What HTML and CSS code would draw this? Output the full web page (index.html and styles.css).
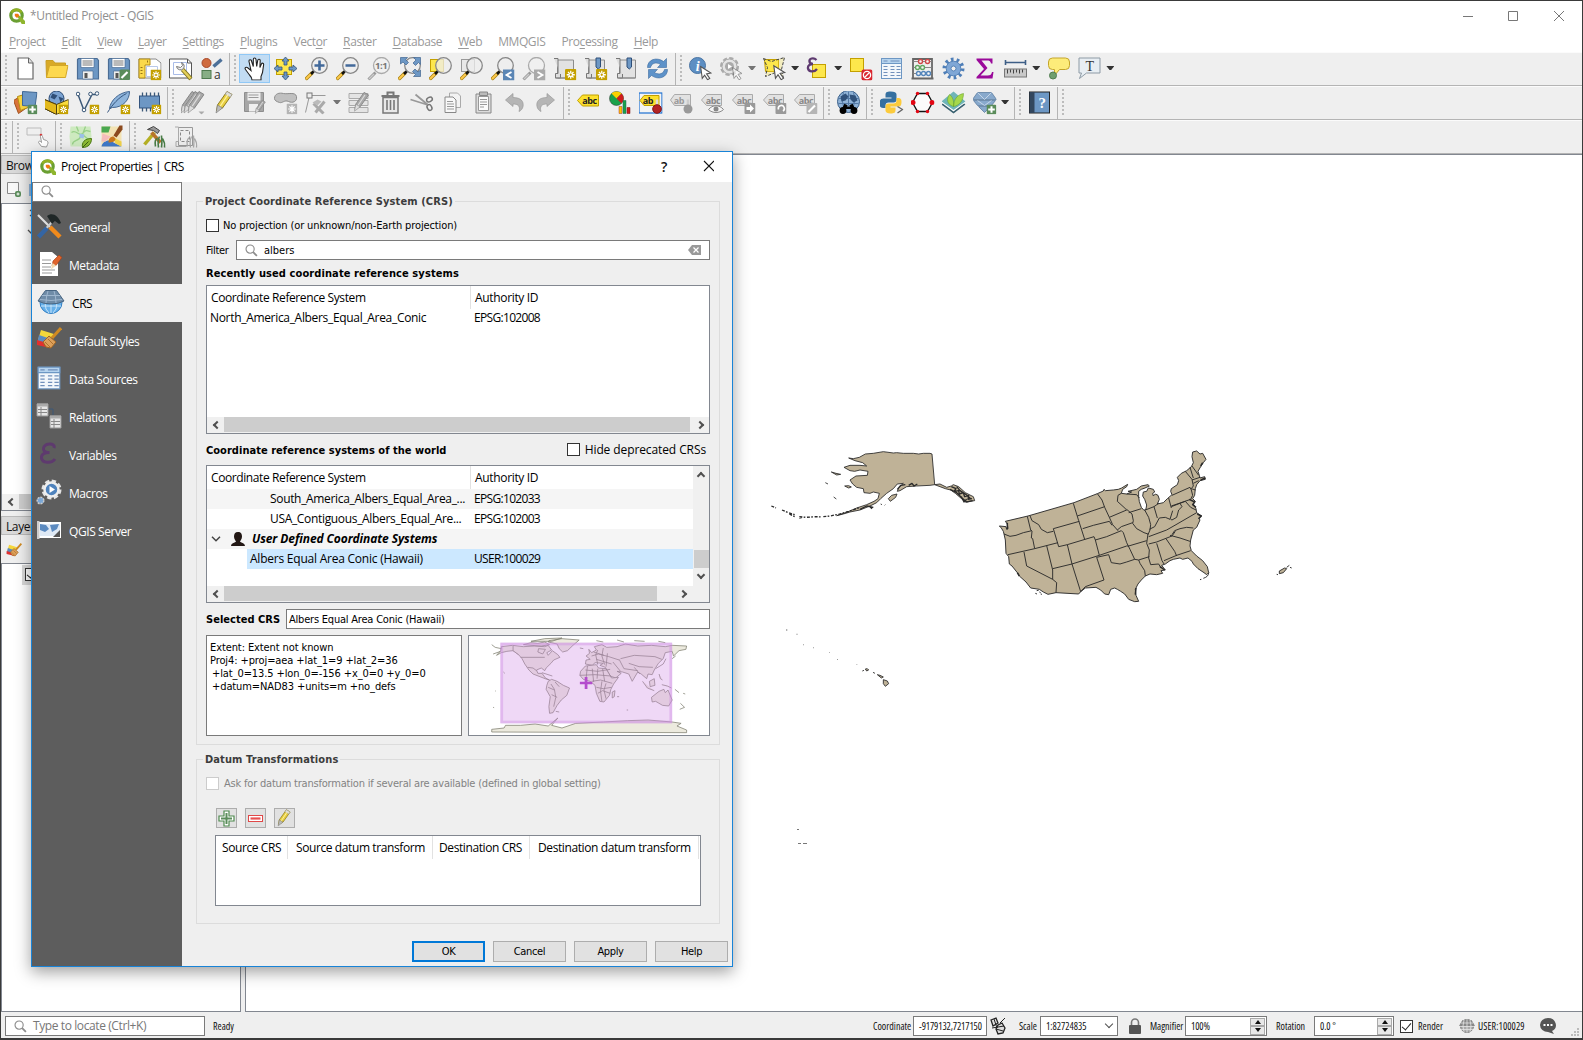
FILE: index.html
```html
<!DOCTYPE html>
<html lang="en">
<head>
<meta charset="utf-8">
<title>*Untitled Project - QGIS</title>
<link rel="stylesheet" href="styles.css">
</head>
<body>
<svg class="sprite" aria-hidden="true">
  <defs>
    <symbol id="logo" viewBox="0 0 16 16"><circle cx="7.5" cy="7.5" r="5.700" fill="none" stroke="#6a9f32" stroke-width="3.200"/><path d="M2.500 4.500A6 6 0 0 1 12.500 4.500" fill="none" stroke="#93b023" stroke-width="2.400"/><path d="M8 8h3l5 5v3h-3.300z" fill="#8fb52e"/><path d="M5.800 5.800h3.200l1.500 1.700-2.500 2.500L5.800 8z" fill="#ee7913"/></symbol>
    <symbol id="glass" viewBox="0 0 14 14"><circle cx="5.500" cy="5.500" r="4.400" fill="none" stroke="#8c8c8c" stroke-width="1.200"/><path d="M8.800 8.800l4 4" stroke="#8c8c8c" stroke-width="2"/></symbol>
    <symbol id="star" viewBox="0 0 10 10"><rect width="10" height="10" rx="1" fill="#c4a000"/><path d="M5 1.500v7M1.500 5h7M2.600 2.600l4.800 4.800M7.400 2.600L2.600 7.400" stroke="#fff" stroke-width="1.100"/><circle cx="5" cy="5" r="1" fill="#c4a000"/></symbol>
    <symbol id="gstar" viewBox="0 0 10 10"><rect width="10" height="10" rx="1" fill="#b5b5b5"/><path d="M5 1.500v7M1.500 5h7M2.600 2.600l4.800 4.800M7.400 2.600L2.600 7.400" stroke="#fff" stroke-width="1.100"/></symbol>
    <symbol id="plus" viewBox="0 0 10 10"><rect width="10" height="10" rx="1.500" fill="#5a8c5a"/><path d="M5 1.700v6.600M1.700 5h6.600" stroke="#fff" stroke-width="2"/></symbol>
    <symbol id="cursor" viewBox="0 0 12 14"><path d="M1 1l9.500 6-4 .8 3 4.200-2 1.300-2.800-4.300L2.500 12z" fill="#fff" stroke="#555" stroke-width="1"/></symbol>
    <symbol id="new" viewBox="0 0 24 24"><path d="M4.500 1.500H15l4.500 5v16h-15z" fill="#fff" stroke="#666" stroke-width="1.200"/><path d="M15 1.500v5h4.500" fill="#ddd" stroke="#666"/></symbol>
    <symbol id="open" viewBox="0 0 24 24"><path d="M2 21L1.500 4h7l2 2.500H21V9" fill="#d9a926" stroke="#c99e23"/><path d="M2 21L5 9h18.500L21 21z" fill="#fdd84e" stroke="#d3a728"/></symbol>
    <symbol id="save" viewBox="0 0 24 24"><path d="M3 2h18.500L23 4v18.500H2V3z" fill="#6d97c4" stroke="#4b6d95" stroke-width="1.200"/><path d="M5.500 2h13v9h-13z" fill="#fff" stroke="#4b6d95" stroke-width=".7"/><path d="M7 4.500h10M7 6.500h10M7 8.500h10" stroke="#777"/><path d="M7 14.500h10.500v8H7z" fill="#eee" stroke="#4b6d95" stroke-width=".7"/><path d="M9 16.500h3v5H9z" fill="#555"/></symbol>
    <symbol id="saveas" viewBox="0 0 24 24"><use href="#save" width="24" height="24"/><rect x="13" y="13" width="10.500" height="10.500" rx="1.500" fill="#5a8c5a"/><path d="M15 21.500l6-6" stroke="#fff" stroke-width="2.200"/></symbol>
    <symbol id="layout" viewBox="0 0 24 24"><path d="M1.500 2.500h17l5 4v15h-22z" fill="#fff" stroke="#888"/><path d="M1.500 2.500h11v6h-5v13h-6z" fill="#fbd94c" stroke="#b38e1b"/><path d="M3 11h2M3 14h2M3 17h2M10 4v2" stroke="#977414"/><path d="M9 10h11v10H9z" fill="none" stroke="#b9c8e8"/><use href="#star" x="13" y="13" width="11" height="11"/></symbol>
    <symbol id="layouts" viewBox="0 0 24 24"><path d="M1 2.500h18l4 4v15H1z" fill="#fff" stroke="#555"/><path d="M19 2.500v4h4" fill="none" stroke="#555"/><path d="M5 6h13v12H5z" fill="none" stroke="#a9bce8"/><path d="M14 13l8.500 9.500" stroke="#857721" stroke-width="4.200"/><path d="M14 13l8 9" stroke="#e3cf5a" stroke-width="2.600"/><path d="M8 10a4 4 0 0 0 7 2 4 4 0 0 0-2-6l1 3-2 2z" fill="#eee" stroke="#777"/></symbol>
    <symbol id="styles" viewBox="0 0 24 24"><circle cx="7" cy="6.500" r="4.500" fill="#cf6a3e" stroke="#a8492a"/><path d="M14 10l8-7" stroke="#4c7099" stroke-width="3.500"/><rect x="2.500" y="14" width="9" height="8" fill="#87ae85" stroke="#4e7a4e"/><text x="14.500" y="22" font-size="12" fill="#333" font-family="Open Sans">a</text></symbol>
    <symbol id="hand" viewBox="0 0 24 24"><path d="M9.500 23.500c0-2-1-3.500-2.500-5L3 13c-1.500-2 1-3 2.500-1.500L8.500 14 6.500 5C6.200 3 8.700 2.500 9 4.500L10.800 10V3c0-2 2.500-2 2.700 0L14.200 10l1-6c.3-1.800 2.700-1.500 2.500.3L17.400 11l1.500-3.500c.7-1.500 2.500-.8 2.200.8L20 16l-1.500 4v3.500z" fill="#fff" stroke="#222" stroke-width="1.100"/></symbol>
    <symbol id="pansel" viewBox="0 0 24 24"><rect x="3" y="3" width="15" height="15" fill="#fde74c" stroke="#c4a000"/><path d="M12 0.500l3.500 4h-2v4h-3v-4h-2zM12 23.500l3.500-4h-2v-4h-3v4h-2zM.5 12l4-3.500v2h4v3h-4v2zM23.500 12l-4-3.500v2h-4v3h4v2z" fill="#6d97c4" stroke="#33537a" stroke-width=".8"/></symbol>
    <symbol id="lens" viewBox="0 0 24 24"><path d="M1 23l7-7" stroke="#a88214" stroke-width="3.500"/><path d="M1.500 22.500l5-5" stroke="#fdc94c" stroke-width="2"/><path d="M6.500 17.500l3-3" stroke="#111" stroke-width="2.500"/><circle cx="15" cy="9" r="7.800" fill="#eee" fill-opacity=".75" stroke="#888" stroke-width="1.300"/></symbol>
    <symbol id="glens" viewBox="0 0 24 24"><path d="M2 23l7-7" stroke="#999" stroke-width="3"/><path d="M2.500 22.500l5-5" stroke="#ccc" stroke-width="1.500"/><circle cx="15" cy="9" r="8" fill="#f0f0f0" stroke="#aaa" stroke-width="1.300"/></symbol>
    <symbol id="zin" viewBox="0 0 24 24"><use href="#lens"/><path d="M15 4v10M10 9h10" stroke="#42699a" stroke-width="2.600"/></symbol>
    <symbol id="zout" viewBox="0 0 24 24"><use href="#lens"/><path d="M10 9h10" stroke="#42699a" stroke-width="2.600"/></symbol>
    <symbol id="z11" viewBox="0 0 24 24"><use href="#glens"/><text x="14.700" y="12.500" font-size="9.500" font-weight="bold" text-anchor="middle" fill="#777" font-family="Open Sans">1:1</text></symbol>
    <symbol id="zfull" viewBox="0 0 24 24"><use href="#lens"/><path d="M3 1h7L8 3l3 3-2.500 2.500-3-3-2.500 2zM23 1v7l-2-2-3 3-2.500-2.500 3-3L16 1zM23 20h-7l2-2-3-3 2.500-2.500 3 3 2.500-2z" fill="#6d97c4" stroke="#41648f" stroke-width=".7"/></symbol>
    <symbol id="zsel" viewBox="0 0 24 24"><rect x="2" y="3" width="13" height="12" fill="#fde74c" stroke="#c4a000"/><use href="#lens"/></symbol>
    <symbol id="zlay" viewBox="0 0 24 24"><rect x="2" y="3" width="13" height="12" fill="#e8e8e8" stroke="#999"/><use href="#lens"/></symbol>
    <symbol id="zprev" viewBox="0 0 24 24"><use href="#lens" width="24" height="24"/><rect x="12.500" y="13" width="11.500" height="11" fill="#5b86b5"/><path d="M21 15.500l-5 3 5 3" fill="none" stroke="#fff" stroke-width="1.800"/></symbol>
    <symbol id="znext" viewBox="0 0 24 24"><use href="#glens" width="24" height="24"/><rect x="12.500" y="13" width="11.500" height="11" fill="#aaa"/><path d="M16 15.500l5 3-5 3" fill="none" stroke="#fff" stroke-width="1.800"/></symbol>
    <symbol id="mapv" viewBox="0 0 24 24"><path d="M5 3.500h16v18H5z" fill="#e2e2e2" stroke="#8c8c8c"/><path d="M1.500 2H5.500V17H3v4.500h5v-4" fill="#ddd" stroke="#777"/><path d="M3 21.500h18" stroke="#888"/></symbol>
    <symbol id="nmap" viewBox="0 0 24 24"><use href="#mapv"/><use href="#star" x="12.500" y="12.500" width="11.500" height="11.500"/></symbol>
    <symbol id="bmk" viewBox="0 0 24 24"><use href="#mapv"/><path d="M12.500 1.500h4.500v9l-2.200 2-2.300-2z" fill="#6d97c4" stroke="#2e4e78"/></symbol>
    <symbol id="nbmk" viewBox="0 0 24 24"><use href="#bmk"/><use href="#star" x="12.500" y="12.500" width="11.500" height="11.500"/></symbol>
    <symbol id="refresh" viewBox="0 0 24 24"><path d="M2 11C2 3 11 0 18 5l3-3v9h-9l3-3C10 5 6 7 5 11z" fill="#5d92c9" stroke="#3e6b9f" stroke-width=".6"/><path d="M22 13c0 8-9 11-16 6l-3 3v-9h9l-3 3c5 3 9 1 10-3z" fill="#5d92c9" stroke="#3e6b9f" stroke-width=".6"/></symbol>
    <symbol id="info" viewBox="0 0 24 24"><circle cx="9" cy="9" r="8" fill="#5d8fc3" stroke="#4a74a3"/><text x="9" y="14" font-size="14" font-style="italic" font-weight="bold" text-anchor="middle" fill="#fff" font-family="Liberation Serif">i</text><use href="#cursor" x="11" y="9" width="13" height="15"/></symbol>
    <symbol id="ggear" viewBox="0 0 24 24"><circle cx="10" cy="10" r="8" fill="#ddd" stroke="#aaa" stroke-width="3" stroke-dasharray="4 2.200"/><circle cx="10" cy="10" r="7.500" fill="#e4e4e4" stroke="#aaa"/><circle cx="10" cy="10" r="4.500" fill="#aaa"/><path d="M8.500 7.500v5l4-2.500z" fill="#fff"/><use href="#cursor" x="12" y="10" width="12" height="14" opacity=".55"/></symbol>
    <symbol id="select" viewBox="0 0 24 24"><path d="M2 3h14v12H3z" fill="#fde74c" stroke="#c4a000"/><path d="M1 2l8 3 13-4-3 12 2 9-8-6-10 4 2-9z" fill="#fde74c" fill-opacity=".3" stroke="#444" stroke-dasharray="3 1.500"/><use href="#cursor" x="10" y="8" width="14" height="16"/></symbol>
    <symbol id="selexp" viewBox="0 0 24 24"><rect x="7" y="8" width="13" height="13" fill="#fde74c" stroke="#c4a000"/><path d="M11 3.500C8 .5 3.500 2 4 5c.2 1.700 1.500 2.500 3.500 2.500C4.500 7.500 2 9 2.500 12c.6 3.500 6.500 4 9 .5" fill="none" stroke="#5e3a70" stroke-width="2.300"/></symbol>
    <symbol id="desel" viewBox="0 0 24 24"><rect x="2" y="2" width="13" height="13" fill="#fde74c" stroke="#c4a000"/><rect x="13" y="13" width="11" height="11" rx="2" fill="#d9262e"/><circle cx="18.500" cy="18.500" r="3.600" fill="none" stroke="#fff" stroke-width="1.300"/><path d="M16 21l5-5" stroke="#fff" stroke-width="1.300"/></symbol>
    <symbol id="table" viewBox="0 0 24 24"><rect x="2" y="2" width="20" height="20" fill="#f3f7fb" stroke="#6d97c4"/><path d="M2 2h20v5H2z" fill="#b5d3ee" stroke="#6d97c4"/><path d="M4 4.500h4M11 4.500h9M4 10h4M4 13h4M4 16h4M4 19h4M11 10h4M11 13h4M11 16h4M11 19h4M17 10h4M17 13h4M17 16h4M17 19h4" stroke="#7190bb" stroke-width="1.100"/></symbol>
    <symbol id="abacus" viewBox="0 0 24 24"><path d="M2.500 21V2.500h19V21M1 22h22" fill="none" stroke="#666" stroke-width="1.800"/><path d="M3 5h18M3 11h18M3 17h18" stroke="#888"/><g fill="#f6f6f6" stroke-width="1.400"><g stroke="#cf4a4a"><circle cx="10" cy="5" r="2"/><circle cx="17" cy="5" r="2"/></g><g stroke="#63a863"><circle cx="7" cy="11" r="2"/><circle cx="12" cy="11" r="2"/></g><g stroke="#5586bb"><circle cx="8" cy="17" r="2"/><circle cx="13" cy="17" r="2"/><circle cx="18" cy="17" r="2"/></g></g></symbol>
    <symbol id="gear" viewBox="0 0 24 24"><circle cx="12" cy="12" r="9" fill="none" stroke="#4f7fb8" stroke-width="4" stroke-dasharray="2.600 3.055"/><circle cx="12" cy="12" r="7.300" fill="#7fa7d6" stroke="#5683b8"/><circle cx="12" cy="12" r="2.500" fill="#efefef" stroke="#5683b8"/></symbol>
    <symbol id="sigma" viewBox="0 0 24 24"><path d="M4 2h16v5h-1.500C18 4.500 17 4 14 4H9l6 7.500L8 19h7c3 0 4-1 4.500-3.500H21L20 22H4v-1.500l7.500-8L4 3.500z" fill="#9a0a9a"/></symbol>
    <symbol id="ruler" viewBox="0 0 24 24"><path d="M2 6h20M2 3.500v5M22 3.500v5" stroke="#3d5e86" stroke-width="1.600"/><rect x="1" y="12.500" width="22" height="8" fill="#c9c9c9" stroke="#777"/><path d="M4 13v4M7 13v3M10 13v4M13 13v3M16 13v4M19 13v3" stroke="#444"/></symbol>
    <symbol id="tip" viewBox="0 0 24 24"><path d="M6 1.500h13a4 4 0 0 1 4 4V9a4 4 0 0 1-4 4h-6l-5 6v-6H6a4 4 0 0 1-4-4V5.500a4 4 0 0 1 4-4z" fill="#fdec7a" stroke="#c4a52a"/><circle cx="6.500" cy="19" r="3.500" fill="#6f9f6f" stroke="#527d52"/></symbol>
    <symbol id="text" viewBox="0 0 24 24"><path d="M1.500 1.500h21v15H9L2 22l2-5.500H1.500z" fill="#e8eef3" stroke="#8d9aa5"/><text x="12" y="14" font-size="14" text-anchor="middle" fill="#333" font-family="Liberation Serif">T</text></symbol>
    <symbol id="addlay" viewBox="0 0 24 24"><path d="M0 10l10-6 5 12-10 7z" fill="#d9733a" stroke="#a1501c"/><path d="M4 6l10-3 3 13-10 4z" fill="#f6d23f" stroke="#b68d14"/><path d="M9 1l14.500 1-2 14-12.500-1z" fill="#6d97c4" stroke="#406894"/><use href="#plus" x="14" y="14" width="10" height="10"/></symbol>
    <symbol id="geopkg" viewBox="0 0 24 24"><circle cx="12" cy="8" r="7.500" fill="#7ba3d2" stroke="#2d4c74"/><path d="M8 3l5 2-3 4-4-2zM14 6l5 2-3 4z" fill="#304f77"/><path d="M0 9l12 5 12-5v9l-12 6-12-6z" fill="#fadc3e" stroke="#4f4010"/><path d="M0 9l12 5v10L0 18z" fill="#e3b91c" stroke="#4f4010"/><use href="#star" x="14" y="14" width="10" height="10"/></symbol>
    <symbol id="newshp" viewBox="0 0 24 24"><path d="M2.500 4l6 16 8-16h5" fill="none" stroke="#3b5878" stroke-width="1.500"/><g fill="#fff" stroke="#3b5878"><circle cx="2.500" cy="3.500" r="1.800"/><circle cx="8.500" cy="19.500" r="1.800"/><circle cx="15" cy="3.500" r="1.800"/><circle cx="21.500" cy="3" r="1.800"/></g><use href="#star" x="14" y="14" width="10" height="10"/></symbol>
    <symbol id="feather" viewBox="0 0 24 24"><path d="M3 18C4 10 12 2 23 1c0 8-6 16-17 16z" fill="#8fb5dc" stroke="#41648f"/><path d="M1 22C6 14 12 7 20 3" fill="none" stroke="#35557e"/><use href="#star" x="14" y="14" width="10" height="10"/></symbol>
    <symbol id="chip" viewBox="0 0 24 24"><path d="M5 2v19M9 2v19M13 2v19M17 2v19M21 2v19" stroke="#3b5878" stroke-width="1.300"/><rect x="2" y="5.500" width="20" height="12" fill="#6d97c4" stroke="#35557e"/><use href="#star" x="14" y="14" width="10" height="10"/></symbol>
    <symbol id="pencil" viewBox="0 0 24 24"><path d="M5 20.500l1-6L15.500 1l5 3L11 17.500z" fill="#e8cf42" stroke="#8d7b1c"/><path d="M15.500 1l5 3-1.800 2.700-5-3z" fill="#ddd" stroke="#999" stroke-width=".6"/><path d="M8.500 16l8-12" stroke="#fff3a0" stroke-width="1.300"/><path d="M6 14.500l5 3-6.500 5z" fill="#bbb" stroke="#777" stroke-width=".6"/></symbol>
    <symbol id="gpencil" viewBox="0 0 24 24"><path d="M5 20.500l1-6L15.500 1l5 3L11 17.500z" fill="#a8a8a8" stroke="#858585"/><path d="M8.500 16l8-12" stroke="#ddd" stroke-width="1.300"/><path d="M6 14.500l5 3-6.500 5z" fill="#ddd" stroke="#888" stroke-width=".6"/></symbol>
    <symbol id="gpens" viewBox="0 0 24 24"><use href="#gpencil" x="-4" y="0" width="24" height="24"/><use href="#gpencil" x="-1" width="24" height="24"/><use href="#gpencil" x="3" width="24" height="24"/><path d="M18 21h6l-3 3z" fill="#aaa"/></symbol>
    <symbol id="gsave" viewBox="0 0 24 24"><path d="M2 2h19v19H2z" fill="#a6a6a6" stroke="#8e8e8e"/><path d="M5 2h13v8H5zM6.500 13.500h9V21h-9z" fill="#efefef"/><path d="M6 4.500h10M6 7h10" stroke="#999"/><use href="#gpencil" x="10" y="9" width="15" height="15"/></symbol>
    <symbol id="gblob" viewBox="0 0 24 24"><path d="M1 8c0-5 5-6 9-5s12-2 13 3-4 7-8 5-6 2-9 1-5-2-5-4z" fill="#c0c0c0" stroke="#8c8c8c"/><use href="#gstar" x="13" y="13" width="11" height="11"/></symbol>
    <symbol id="gvertex" viewBox="0 0 24 24"><path d="M1 22L5 5h16" fill="none" stroke="#999"/><rect x="2.500" y="2.500" width="5" height="5" fill="#eee" stroke="#777"/><path d="M9 13l10 10M20 11l-9 11" stroke="#aaa" stroke-width="3"/><path d="M8 12l5-3 4 2-4 4z" fill="#bbb"/></symbol>
    <symbol id="gform" viewBox="0 0 24 24"><path d="M1.500 3h19v5h-19zM1.500 10h19v5h-19zM1.500 17h19v5h-19z" fill="#e4e4e4" stroke="#aaa"/><use href="#gpencil" x="3" y="1" width="21" height="21"/></symbol>
    <symbol id="trash" viewBox="0 0 24 24"><path d="M4.500 7h15v15.500h-15z" fill="#e8e8e8" stroke="#777" stroke-width="1.500"/><path d="M3 5.500h18M9 5V2h6v3" fill="none" stroke="#777" stroke-width="2"/><path d="M8.500 9.500v10M12 9.500v10M15.500 9.500v10" stroke="#777" stroke-width="1.600"/></symbol>
    <symbol id="cut" viewBox="0 0 24 24"><path d="M1 9l16 5M6 4l12 10" stroke="#999" stroke-width="1.800"/><ellipse cx="20" cy="9" rx="3" ry="2.200" transform="rotate(-30 20 9)" fill="none" stroke="#777" stroke-width="1.500"/><ellipse cx="20" cy="17" rx="2.200" ry="3" transform="rotate(-30 20 17)" fill="none" stroke="#777" stroke-width="1.500"/></symbol>
    <symbol id="copy" viewBox="0 0 24 24"><path d="M9 2.500h8l3 3V17H9z" fill="#f3f3f3" stroke="#aaa"/><path d="M4.500 6.500h8l3 3V22h-11z" fill="#f8f8f8" stroke="#888"/><path d="M6.500 11h6M6.500 13.500h7M6.500 16h7M6.500 18.500h7" stroke="#999"/></symbol>
    <symbol id="paste" viewBox="0 0 24 24"><path d="M4.500 3.500h15v19h-15z" fill="#ddd" stroke="#888"/><path d="M7 6h10v14H7z" fill="#fbfbfb" stroke="#999"/><path d="M8 1.500h8V5H8z" fill="#bbb" stroke="#888"/><path d="M8.500 9h7M8.500 11.500h7M8.500 14h7M8.500 16.500h4" stroke="#999"/></symbol>
    <symbol id="undo" viewBox="0 0 24 24"><path d="M3 9.500L10.500 3v4c8 0 11 4 10 9-.5 2.500-2 4-4 5 1.500-5-.5-7.500-6-7.500V16z" fill="#b5b5b5" stroke="#999" stroke-width=".7"/></symbol>
    <symbol id="redo" viewBox="0 0 24 24"><use href="#undo" transform="matrix(-1 0 0 1 24 0)"/></symbol>
    <symbol id="abc" viewBox="0 0 24 24"><path d="M1 10L6 4.500h16v11H6z" fill="#fde02c" stroke="#c0a000"/><text x="13" y="13.500" font-size="9" font-weight="bold" text-anchor="middle" fill="#222" font-family="Open Sans">abc</text></symbol>
    <symbol id="gabc" viewBox="0 0 24 24"><path d="M1 9.500L6 4h15v11H6z" fill="#e2e2e2" stroke="#aaa"/><text x="12.500" y="13" font-size="9" font-weight="bold" text-anchor="middle" fill="#888" font-family="Open Sans">abc</text></symbol>
    <symbol id="chart" viewBox="0 0 24 24"><circle cx="9" cy="8" r="7" fill="#1aa14b" stroke="#333" stroke-width=".5"/><path d="M9 8L4 3a7 7 0 0 1 10 0z" fill="#fdd000"/><path d="M9 8l5-5a7 7 0 0 1 0 10z" fill="#d01c1c"/><path d="M11.500 16h3v7h-3z" fill="#fdc400" stroke="#a33" stroke-width=".5"/><path d="M15.500 10h3v13h-3z" fill="#1aa14b" stroke="#265" stroke-width=".5"/><path d="M19.500 17h3v6h-3z" fill="#d01c1c" stroke="#711" stroke-width=".5"/></symbol>
    <symbol id="abpin" viewBox="0 0 24 24"><rect x=".5" y="2.500" width="23" height="20" fill="#f4f4f4" stroke="#1c6fd1" stroke-width="1.200"/><path d="M1.500 10l4-5h15v10h-15z" fill="#fde02c" stroke="#c0a000"/><text x="9.500" y="13.500" font-size="9" font-weight="bold" text-anchor="middle" fill="#222" font-family="Open Sans">ab</text><path d="M18.500 9v7" stroke="#ddd" stroke-width="2.500"/><circle cx="18.500" cy="18.500" r="4.300" fill="#b32424" stroke="#861515"/></symbol>
    <symbol id="gabpin" viewBox="0 0 24 24"><path d="M1 9.500L5 4h16v11H5z" fill="#e2e2e2" stroke="#aaa"/><text x="9.500" y="13" font-size="9" font-weight="bold" text-anchor="middle" fill="#999" font-family="Open Sans">ab</text><path d="M18.500 9v7" stroke="#ccc" stroke-width="2.500"/><circle cx="18.500" cy="18.500" r="4.500" fill="#999"/></symbol>
    <symbol id="gabeye" viewBox="0 0 24 24"><use href="#gabc"/><path d="M8 19c4-5 11-5 15 0-4 4-11 4-15 0z" fill="#f5f5f5" stroke="#888"/><circle cx="15.500" cy="18.500" r="2.500" fill="#888"/></symbol>
    <symbol id="gabmove" viewBox="0 0 24 24"><use href="#gabc"/><rect x="13" y="12.500" width="11" height="11" rx="1" fill="#999"/><path d="M15 16.500h3.500v-2.500l4 4-4 4v-2.500H15z" fill="#fff"/></symbol>
    <symbol id="gabrot" viewBox="0 0 24 24"><use href="#gabc"/><rect x="13" y="12.500" width="11" height="11" rx="1" fill="#999"/><path d="M16 19a3 3 0 1 1 4.500 1.500" fill="none" stroke="#fff" stroke-width="1.600"/></symbol>
    <symbol id="gabedit" viewBox="0 0 24 24"><use href="#gabc"/><rect x="13" y="12.500" width="11" height="11" rx="1" fill="#b5b5b5"/><path d="M15 21.500l6.500-6.500" stroke="#fff" stroke-width="2.200"/></symbol>
    <symbol id="metas" viewBox="0 0 24 24"><circle cx="12" cy="11" r="11" fill="#8fb2d6" stroke="#3a5f89"/><path d="M2 8h20M2 13h20M12 1v14M7 2q-3 7 0 14M17 2q3 7 0 14" fill="none" stroke="#5379a5"/><path d="M4 6l5-3 3 3-3 4-4 1zM13 4l6 1 2 5-4 2-3-3z" fill="#31527b"/><path d="M9.500 14l-3 6M14.500 14l3 6" stroke="#000" stroke-width="3.600"/><circle cx="6.500" cy="20" r="3.400"/><circle cx="17.500" cy="20" r="3.400"/><path d="M9 16h6v2.500H9z"/></symbol>
    <symbol id="python" viewBox="0 0 24 24"><path d="M11 1c-4 0-5 1-5 3.500V7h6v1H4c-3 0-4 2-4 5s1 4.500 3.500 4.500H6V15c0-2 1-3 3-3h5c2 0 3-1 3-3V4c0-2-2-3-6-3z" fill="#3670a0"/><path d="M11 23c4 0 5-1 5-3.500V17h-5v-1h8c2 0 3-1.500 3-4.500s-1-4-3-4h-2V10c0 2-1 3-3 3H9c-2 0-3 1-3 3v4c0 2 2 3 5 3z" fill="#fccb3c"/><path d="M18 16l5 3-5 3.500" fill="none" stroke="#666" stroke-width="1.300"/></symbol>
    <symbol id="hexa" viewBox="0 0 24 24"><path d="M7 3h10l5 9-5 9H7l-5-9z" fill="#fbfbfb" stroke="#111" stroke-width="1.300"/><g fill="#e30613"><circle cx="7" cy="3" r="1.700"/><circle cx="17" cy="3" r="1.700"/><circle cx="7" cy="21" r="1.700"/><circle cx="17" cy="21" r="1.700"/><circle cx="2.500" cy="12" r="2.500"/><circle cx="21.500" cy="12" r="2.500"/></g></symbol>
    <symbol id="leafl" viewBox="0 0 24 24"><path d="M12 4l12 10-12 9L0 14z" fill="#38606f"/><path d="M12 2l12 10-12 9L0 12z" fill="#fff"/><path d="M12 1l12 10-12 8.500L0 11z" fill="#6fb5b8"/><path d="M12 16C5 14 5 8 8 4c3 2 5 7 4 12zM12 16c0-7 4-12 10-13 0 7-4 12-10 13z" fill="#a6d84c" stroke="#5f9a22" stroke-width=".5"/></symbol>
    <symbol id="addg" viewBox="0 0 24 24"><path d="M5 2h14l5 7H0zM1 10h22l-4 5H5zM6 16h12l-6 6z" fill="#88a9cc" stroke="#527499" stroke-width=".7"/><path d="M5 2l7 7 7-7M5 10l7 5 7-5" fill="none" stroke="#dfe9f3" stroke-width=".7"/><use href="#plus" x="14" y="14" width="10" height="10"/></symbol>
    <symbol id="help" viewBox="0 0 24 24"><rect x="2" y="1.500" width="20" height="21" fill="#6d97c4" stroke="#222"/><path d="M2 1.500h5v21H2z" fill="#33475e"/><text x="14.500" y="17" font-size="15" text-anchor="middle" fill="#fff" font-weight="bold" font-family="Liberation Serif">?</text></symbol>
    <symbol id="seltouch" viewBox="0 0 24 24"><path d="M1.500 3.500h14v7h-14z" fill="none" stroke="#bbb"/><circle cx="15.500" cy="10.500" r="1.300" fill="#d33"/><path d="M16 22l-3-4c0-1 1-2 2-1l1 1-1-6c0-1.500 1.700-1.500 2 0l1 3 3 1c1.500 1 2 2 1 4l-1 2.500z" fill="#fff" stroke="#999"/></symbol>
    <symbol id="osm1" viewBox="0 0 24 24"><path d="M2 2h20l1 10-2 10H2L1 12z" fill="#cdeabf"/><path d="M3 8c5-4 7 5 11 1s4-3 8-2M4 20c0-5 7-3 8-8M8 2l2 5M17 2l-3 8 6 5" fill="none" stroke="#98d088" stroke-width="1.300"/><path d="M11 9l5 1-1 4-4-1z" fill="#9bbfe8"/><path d="M14 23c-1-5 2-9 9-9 0 5-3 9-9 9z" fill="#8dbb35" stroke="#4c7a14"/><path d="M14 23l6-6" stroke="#3a6010"/></symbol>
    <symbol id="osm2" viewBox="0 0 24 24"><path d="M2 2h20v20H2z" fill="#f3e3b4"/><path d="M2 2h9l-2 6H2z" fill="#4aa850"/><path d="M2 22c1-6 9-8 12-4l8 4z" fill="#3f79c9"/><path d="M3 9l8 3-5 5H2z" fill="#f5bcbc"/><path d="M14 13l8 4v5l-6-3z" fill="#f0d24a"/><path d="M14 11L20 1h3v4l-6 8z" fill="#8c4a1e"/><path d="M9 18c0-4 2-6 5-6l2 2c0 3-3 4-7 4z" fill="#c8781e"/></symbol>
    <symbol id="mm1" viewBox="0 0 24 24"><path d="M2 20L12 8" stroke="#b6b124" stroke-width="3.500"/><path d="M5 5l6-3 6 4-2 3-4-3z" fill="#999" stroke="#444"/><path d="M9 8l9 10" stroke="#b8742a" stroke-width="3.500"/><path d="M13 22c-1-5 0-8 2-8M16 23c-1-6 0-9 1-11M19 23c1-6 0-9 0-12M22 23c1-5-1-7-2-9" fill="none" stroke="#4a7d47" stroke-width="1.600"/></symbol>
    <symbol id="mm2" viewBox="0 0 24 24"><path d="M5 3h14v18H5z" fill="#eee" stroke="#999"/><path d="M1.500 2.500H5V17H2.500v5H13" fill="none" stroke="#aaa"/><path d="M7 6h9v11H7z" fill="none" stroke="#888" stroke-dasharray="3 2"/><path d="M14 22c-1-5 0-8 2-9M17 23c-1-6 0-9 1-11M20 23c1-6 0-9 0-12M23 23c1-5-1-7-2-9" fill="none" stroke="#aaa" stroke-width="1.300"/></symbol>
    <symbol id="tools" viewBox="0 0 26 26"><path d="M2 2l12 12" stroke="#ddd" stroke-width="2.200"/><path d="M14 14l10 10" stroke="#f08a1c" stroke-width="4.500"/><path d="M3 23L18 7" stroke="#ccc" stroke-width="2.200"/><path d="M2.500 24l8.500-9" stroke="#3465a4" stroke-width="4.500"/><path d="M11 3c5-4 11-1 14 7l-2 1-4-3-3 3z" fill="#1f2727"/></symbol>
    <symbol id="meta" viewBox="0 0 26 26"><path d="M4 1h12l6 5v19H4z" fill="#fff"/><path d="M6 9h9M6 12.500h9M6 16h9M6 19h13M6 22h10" stroke="#999" stroke-width="1.200"/><path d="M16 15l1-5 6-6 3 2.500-6 8z" fill="#e0632b" stroke="#9e3d14" stroke-width=".6"/><path d="M16.500 12l3.500 2.500-5 4z" fill="#f3d9ae"/></symbol>
    <symbol id="globe" viewBox="0 0 28 26"><circle cx="14" cy="13.500" r="11" fill="#66b0ea" stroke="#3380c4"/><path d="M4 17h20M14 14v10M8 14q0 7 4 10M20 14q0 7-4 10" fill="none" stroke="#c7e4fa"/><path d="M8.500 1.500h11q3 4 7.500 10.500-5 3-13 3t-13-3Q5 6 8.500 1.500z" fill="#6f8ca8" stroke="#476582"/><path d="M11 2q-2 6-2 12M17 2q2 6 2 12M5 6.500h18M3 10.500q11 2 22 0" fill="none" stroke="#9fb7cf"/></symbol>
    <symbol id="brush" viewBox="0 0 26 26"><path d="M5 3l13 4-4 6H2z" fill="#f5d73c"/><path d="M3 8l12 4-3 5H1z" fill="#5b8ac0"/><path d="M1 13l10 3 3 5-13-3z" fill="#e2302e"/><path d="M16 11l9-10" stroke="#d08a22" stroke-width="3"/><path d="M7 15l6-6 7 6-5 6-5-1z" fill="#dda05a" stroke="#a16522"/><path d="M9 15l5 5M12 12l5 5" stroke="#a16522" stroke-width=".8"/></symbol>
    <symbol id="rel" viewBox="0 0 26 26"><path d="M12 6h5v6" fill="none" stroke="#3d5878"/><path d="M1 1h11v12H1zM14 13h11v12H14z" fill="#e6e6e6" stroke="#999"/><path d="M1 2h11M14 14h11" stroke="#aaa" stroke-width="3"/><path d="M2 6.500h9M2 9.500h9M15 18.500h9M15 21.500h9M5 4v9M18 16v9" stroke="#888"/></symbol>
    <symbol id="eps" viewBox="0 0 26 26"><path d="M18 7c1-3-2-4.500-5-4-4 .5-6 3-5.500 5.500C8 11 11 11.500 13.500 11.500 9 11.500 5 13 5.500 17c.6 5 10 6 13.500 1" fill="none" stroke="#5e3a6e" stroke-width="3"/></symbol>
    <symbol id="macro" viewBox="0 0 26 26"><circle cx="15.500" cy="10.500" r="8" fill="none" stroke="#e4e4e4" stroke-width="4" stroke-dasharray="4 2.280"/><circle cx="15.500" cy="10.500" r="7" fill="#4f83bd" stroke="#eee" stroke-width="2.500"/><path d="M13.500 7v7l5.500-3.500z" fill="#fff"/><circle cx="4.500" cy="21.500" r="3.300" fill="#7aa7d6" stroke="#ccc" stroke-width="1.500" stroke-dasharray="2 1"/></symbol>
    <symbol id="server" viewBox="0 0 26 26"><path d="M1 5h24v16H1z" fill="#fff"/><path d="M4 7h20v12H4z" fill="#dfe9f5"/><path d="M4 7l6 1 3 4-4 3-5-2zM14 8l9-1-2 5-5 3z" fill="#5b8ac0"/><path d="M17 20l7-7v7z" fill="#555"/><path d="M1 4h2.500v18H1z" fill="#ccc"/></symbol>
    <symbol id="person" viewBox="0 0 14 14"><path d="M7 0c3 0 4 2 4 4.500S9.500 8.500 9 9.500c1 1.500 4.500 1 5 4.500H0C.5 10.500 4 11 5 9.500 4.500 8.500 3 7 3 4.500S4 0 7 0z" fill="#231815"/></symbol>
    <symbol id="world" viewBox="0 0 16 16"><circle cx="8" cy="8" r="6.500" fill="#aaa" stroke="#777"/><path d="M3.500 2h9L16 8H0z" fill="#888"/><path d="M8 1v14M5 2q-2 6 0 12M11 2q2 6 0 12M1.500 5h13M1 8.500h14M2 11.500h12" fill="none" stroke="#e5e5e5" stroke-width=".8"/></symbol>
  </defs>
</svg>

<div class="window">
  <header class="titlebar">
    <svg class="logo"><use href="#logo"/></svg>
    <span class="caption">*Untitled Project - QGIS</span>
    <svg class="winbtns" viewBox="0 0 104 12"><path d="M1 6.500h10M46.500 1.500h9v9h-9zM92 1l10 10M102 1L92 11" fill="none" stroke="#777"/></svg>
  </header>
  <nav class="menubar">
    <span><u>P</u>roject</span><span><u>E</u>dit</span><span><u>V</u>iew</span><span><u>L</u>ayer</span><span><u>S</u>ettings</span><span><u>P</u>lugins</span><span>Vect<u>o</u>r</span><span><u>R</u>aster</span><span><u>D</u>atabase</span><span><u>W</u>eb</span><span>MMQGIS</span><span>Pro<u>c</u>essing</span><span><u>H</u>elp</span>
  </nav>

  <div class="toolrow">
    <div class="tools"><i class="grip"></i>
      <svg><use href="#new"/></svg><svg><use href="#open"/></svg><svg><use href="#save"/></svg><svg><use href="#saveas"/></svg><svg><use href="#layout"/></svg><svg><use href="#layouts"/></svg><svg><use href="#styles"/></svg>
    </div>
    <div class="tools"><i class="grip"></i>
      <svg class="active"><use href="#hand"/></svg><svg><use href="#pansel"/></svg><svg><use href="#zin"/></svg><svg><use href="#zout"/></svg><svg><use href="#z11"/></svg><svg><use href="#zfull"/></svg><svg><use href="#zsel"/></svg><svg><use href="#zlay"/></svg><svg><use href="#zprev"/></svg><svg><use href="#znext"/></svg><svg><use href="#nmap"/></svg><svg><use href="#nbmk"/></svg><svg><use href="#bmk"/></svg><svg><use href="#refresh"/></svg>
    </div>
    <div class="tools last"><i class="grip"></i>
      <svg><use href="#info"/></svg><svg><use href="#ggear"/></svg><i class="drop dim"></i><svg><use href="#select"/></svg><i class="drop"></i><svg><use href="#selexp"/></svg><i class="drop"></i><svg><use href="#desel"/></svg><svg><use href="#table"/></svg><svg><use href="#abacus"/></svg><svg><use href="#gear"/></svg><svg><use href="#sigma"/></svg><svg><use href="#ruler"/></svg><i class="drop"></i><svg><use href="#tip"/></svg><svg><use href="#text"/></svg><i class="drop"></i>
    </div>
  </div>
  <div class="toolrow">
    <div class="tools"><i class="grip"></i>
      <svg><use href="#addlay"/></svg><svg><use href="#geopkg"/></svg><svg><use href="#newshp"/></svg><svg><use href="#feather"/></svg><svg><use href="#chip"/></svg>
    </div>
    <div class="tools"><i class="grip"></i>
      <svg><use href="#gpens"/></svg><svg><use href="#pencil"/></svg><svg><use href="#gsave"/></svg><svg><use href="#gblob"/></svg><svg><use href="#gvertex"/></svg><i class="drop dim"></i><svg><use href="#gform"/></svg><svg><use href="#trash"/></svg><svg><use href="#cut"/></svg><svg><use href="#copy"/></svg><svg><use href="#paste"/></svg><svg><use href="#undo"/></svg><svg><use href="#redo"/></svg>
    </div>
    <div class="tools"><i class="grip"></i>
      <svg><use href="#abc"/></svg><svg><use href="#chart"/></svg><svg><use href="#abpin"/></svg><svg><use href="#gabpin"/></svg><svg><use href="#gabeye"/></svg><svg><use href="#gabmove"/></svg><svg><use href="#gabrot"/></svg><svg><use href="#gabedit"/></svg>
    </div>
    <div class="tools"><i class="grip"></i><svg><use href="#metas"/></svg></div>
    <div class="tools"><i class="grip"></i><svg><use href="#python"/></svg><svg><use href="#hexa"/></svg><svg><use href="#leafl"/></svg><svg><use href="#addg"/></svg><i class="drop"></i></div>
    <div class="tools"><i class="grip"></i><svg><use href="#help"/></svg></div>
    <div class="tools last"><i class="grip"></i></div>
  </div>
  <div class="toolrow">
    <div class="tools"><i class="grip"></i></div>
    <div class="tools"><i class="grip"></i><svg><use href="#seltouch"/></svg></div>
    <div class="tools"><i class="grip"></i><svg><use href="#osm1"/></svg><svg><use href="#osm2"/></svg></div>
    <div class="tools last"><i class="grip"></i><svg><use href="#mm1"/></svg><svg><use href="#mm2"/></svg></div>
  </div>

  <main class="work">
    <aside class="docks">
      <section class="dock browser">
        <h2>Browser</h2>
        <div class="docktools"><svg viewBox="0 0 18 18"><path d="M1.500 1.500h11v11h-11z" fill="#f8f8f8" stroke="#888"/><rect x="9" y="10" width="6" height="6" rx="2" fill="#5a8c5a"/><path d="M12 11.500v3M10.500 13h3" stroke="#fff"/></svg><i class="bluebit"></i></div>
        <div class="tree"><svg class="twisty" viewBox="0 0 10 30"><path d="M3 1l4 3-4 3M1 21l4 4 4-4" fill="none" stroke="#555" stroke-width="1.300"/></svg>
          <div class="hscroll"><b class="al"></b><i class="thumb"></i></div></div>
      </section>
      <section class="dock layers">
        <h2>Layers</h2>
        <div class="docktools"><svg><use href="#brush"/></svg></div>
        <div class="tree"><div class="layerrow"><i class="check on"></i></div></div>
      </section>
    </aside>
    <div class="canvas">
      <svg viewBox="246 155 1336 856" aria-label="Map">
        <g transform="translate(980 430) scale(.33333)" fill="#bfb297" stroke="#2a2a2a" stroke-width="2.800" stroke-linejoin="round">
          <path d="M58 288L78 290 80 298 84 296 82 282 76 274 144 258 282 218 352 191 370 183 372 178 376 182 400 180 415 178 425 174 443 163 440 170 428 178 424 190 440 192 455 186 444 184 470 178 484 168 504 164 508 168 495 174 484 178 476 184 476 200 478 215 484 232 492 241 498 237 500 225 494 208 488 198 490 186 500 184 505 174 520 178 524 186 518 190 520 198 526 192 534 196 538 208 532 222 550 218 562 206 576 194 572 184 574 176 592 164 596 152 592 142 604 130 620 122 634 110 640 98 636 80 638 66 650 63 660 72 668 70 678 88 670 98 662 110 654 124 658 136 660 144 674 140 676 148 660 152 650 164 646 176 644 196 638 206 646 214 640 222 648 236 650 248 664 258 656 264 660 270 650 292 640 300 632 330 630 348 634 362 650 378 668 392 682 410 686 428 680 434 672 428 654 416 640 402 636 394 624 384 608 388 600 384 580 388 570 392 556 402 545 406 556 420 543 422 548 430 530 434 510 432 496 438 484 450 474 462 466 478 468 496 476 514 464 515 446 508 434 492 422 484 412 478 404 474 392 478 386 494 374 492 362 480 348 472 316 474 302 485 296 492 228 488 204 493 190 486 178 478 152 474 138 456 118 438 112 428 96 408 88 402 86 380 78 370 76 330 72 312 70 304 64 294Z"/>
          <path fill="none" d="M72 312L90 319 108 316 130 308 156 302M142 259L152 300 156 304 154 324 158 326 164 356M84 374L164 356 234 338M132 366L140 408 218 448M200 347L218 420 218 448 230 458 228 488M218 416L276 402M262 344L276 402 302 485M150 257L156 272 176 284 184 298 202 308 220 304M220 296L298 274M220 296L236 350 262 344 342 320 346 330M280 220L296 272 314 328M292 258L374 230M308 296L340 286 388 274 396 286M346 330L380 320 424 302M346 330L358 376M276 402L358 376 440 348 446 348M350 382L372 450 316 470 302 485M350 382L386 374 394 398 420 402 440 396 464 388 476 390M424 302L430 308 440 338 450 358 464 388M446 348L500 332M476 390L508 380M476 390L480 400 494 422 496 438M504 312L500 340 508 360 506 384 512 404 536 402 543 414M352 191L366 210 374 232 388 262M388 262L440 240M388 262L398 284 414 302M412 300L424 290 458 278M440 238L456 252 460 272 458 280 470 296 492 308 504 312M424 190L414 196 412 214 432 232 440 240M446 248L484 236M440 192L470 194 478 204M494 240L506 262 512 284 510 300 504 314M496 240L522 230 536 220M522 230L532 264M508 298L524 290 538 264 556 262 570 268 578 242M566 204L574 234M506 320L560 300 588 284 650 248M506 342L530 336 576 318 586 304M530 340L546 392 552 402M558 326L584 364 590 378M552 392L590 376 632 362M570 316L600 324 630 334M576 314L584 302 600 296 620 292 640 294M574 230L600 220 606 230 596 240 590 262 576 270 572 268M576 196L630 172 634 180 638 196 632 208 574 228M634 176L646 180M616 124L636 148 640 168 634 176M630 112L640 144M636 108L656 136M636 150L660 142M640 160L656 152M600 220L616 214 632 232 648 240"/>
          <path fill="none" stroke-width="4.500" d="M82 278v20M112 428l6 10M668 98l-6 10M628 208l16 8-6 8 10 8M652 252l12 6-8 8M468 474l-2 20M540 410l14 10M662 150l14-6"/>
          <path fill="none" d="M686 428q0 12-16 17M166 490l5 2M178 486l4 2M170 482l6-1M182 492l4 1M660 449l4-1"/>
          <path d="M898 423l16-9 6 2-10 12-12 3zM920 412l8-6M930 412l5 2M890 433l4 1"/>
        </g>
        <g transform="translate(760 430) scale(.33333)" fill="#bfb297" stroke="#2a2a2a" stroke-width="2.600" stroke-linejoin="round">
          <path d="M266 84L280 86 298 82 316 72 340 70 370 65 400 69 410 68 430 70 460 70 476 72 490 70 510 70 516 72 524 164 510 166 470 168 440 170 420 182 412 184 416 174 430 160 412 162 400 176 380 190 362 206 350 218 330 228 300 240 270 246 250 252 230 257 262 246 290 234 320 224 342 214 354 206 358 190 340 186 330 190 312 188 310 176 290 172 278 162 270 150 288 138 322 136 324 124 300 120 284 124 270 122 252 112 270 106 300 106 320 108 308 98 285 92Z"/>
          <path d="M524 164L540 162 560 172 574 168 580 164 596 170 616 188 640 200 644 212 630 214 616 216 600 202 586 190 572 180 556 176 540 170ZM385 206l10-10 16-4-4 10-16 12zM254 168l12-1 8 4-8 3zM214 126l14 4 14 3-12 2z"/>
          <path fill="none" stroke-width="4" d="M574 170l14 6-6 8 14-2 2 10 12-4 4 12 12-4-2 12 12-2M570 178l20 10 16 16 14 12 18-4M590 170l10 12 16 10 16 14M604 200l8 16 8-8M412 178l10-12 14-2M446 166l10-6 6 8 10-6M300 238l20-10 20 4M330 230l6 6"/>
          <path fill="none" stroke-width="4" stroke-dasharray="9 4 5 5" d="M34 228l14 6M66 240l14 6 24 8M88 252l16 8M118 260l20 2 30-2 18 1M190 260l20-2 30-6 26-8 30-10"/>
          <path fill="none" d="M196 158l8 4M221 201l8 6M118 265l8-2M362 222l4 2M374 226l2-2"/>
          <path d="M370 749l12 4 4 8-10 8-6-8zM352 734l8 2 10 5-6 3zM316 717l6-1 4 4-6 3zM339 727l6 3M307 723l5-2"/>
          <path stroke="none" fill="#999" d="M78 598h4v4h-4zM109 611h4v3h-4zM129 643h3v3h-3zM159 652h3v3h-3zM207 667h3v2h-3zM231 687h3v3h-3zM289 703h3v2h-3z"/>
        </g>
        <path d="M797 829.500h2M798 843.500h3M803 843.500h4" stroke="#777" stroke-width="1"/>
      </svg>
    </div>
  </main>

  <footer class="status">
    <div class="field locate"><svg class="g12"><use href="#glass"/></svg>Type to locate (Ctrl+K)</div>
    <span class="ready">Ready</span>
    <span class="s-coord">Coordinate</span><div class="field f-coord">-9179132,7217150</div>
    <svg class="mouse" viewBox="0 0 16 18"><path d="M1 3l5-2 2 5-5 3zM8 8l4-2 3 5-2 5-5 1-2-5z" fill="#ddd" stroke="#222" stroke-width="1.300"/><path d="M10 6l5-5M2 11l12-2M6 12l7 2M4 2l3 9" stroke="#222"/></svg>
    <span class="s-scale">Scale</span><div class="field f-scale">1:82724835<b class="ad"></b></div>
    <svg class="lock" viewBox="0 0 12 16"><path d="M2.500 8V4.500a3.500 3.500 0 0 1 7 0V8" fill="none" stroke="#777" stroke-width="1.600"/><rect y="7" width="12" height="9" rx="1" fill="#555"/></svg>
    <span class="s-mag">Magnifier</span><div class="field f-mag">100%<i class="spin"><b></b><b></b></i></div>
    <span class="s-rot">Rotation</span><div class="field f-rot">0.0 °<i class="spin"><b></b><b></b></i></div>
    <i class="check on"></i><span class="s-render">Render</span>
    <svg class="world"><use href="#world"/></svg><span class="s-user">USER:100029</span>
    <svg class="bubble" viewBox="0 0 16 16"><path d="M8 0a8 7 0 0 1 4 13l2 3-6-2A8 7 0 0 1 8 0z" fill="#555"/><path d="M3.500 7h2M7 7h2M10.500 7h2" stroke="#fff" stroke-width="1.800"/></svg>
    <svg class="sizegrip" viewBox="0 0 9 9"><path d="M6 0h2v2H6zM3 3h2v2H3zM6 3h2v2H6zM0 6h2v2H0zM3 6h2v2H3zM6 6h2v2H6z" fill="#bbb"/></svg>
  </footer>
</div>

<div class="dialog">
  <header class="dtitle">
    <svg class="logo"><use href="#logo"/></svg><span>Project Properties | CRS</span>
    <svg class="dbtns" viewBox="0 0 56 12"><path d="M46 1l10 10M56 1L46 11" stroke="#111" stroke-width="1.100"/></svg>
    <b class="q">?</b>
  </header>
  <div class="dbody">
    <nav class="side">
      <div class="sfind"><svg class="g12"><use href="#glass"/></svg></div>
      <ul>
        <li><svg><use href="#tools"/></svg>General</li>
        <li><svg><use href="#meta"/></svg>Metadata</li>
        <li class="sel"><svg><use href="#globe"/></svg>CRS</li>
        <li><svg><use href="#brush"/></svg>Default Styles</li>
        <li><svg><use href="#table"/></svg>Data Sources</li>
        <li><svg><use href="#rel"/></svg>Relations</li>
        <li><svg><use href="#eps"/></svg>Variables</li>
        <li><svg><use href="#macro"/></svg>Macros</li>
        <li><svg><use href="#server"/></svg>QGIS Server</li>
      </ul>
    </nav>
    <div class="page">
      <fieldset class="crs">
        <legend>Project Coordinate Reference System (CRS)</legend>
        <label class="opt noproj"><i class="check"></i>No projection (or unknown/non-Earth projection)</label>
        <div class="filter"><span>Filter</span><div class="field"><svg class="g12"><use href="#glass"/></svg><em>albers</em><svg class="clear" viewBox="0 0 13 10"><path d="M4 0h9v10H4L0 5z" fill="#999"/><path d="M5.500 2.500l5 5M10.500 2.500l-5 5" stroke="#fff" stroke-width="1.200"/></svg></div></div>
        <h3 class="h-recent">Recently used coordinate reference systems</h3>
        <div class="list recent">
          <div class="lhead"><span>Coordinate Reference System</span><span>Authority ID</span></div>
          <div class="lrow"><span>North_America_Albers_Equal_Area_Conic</span><span class="id">EPSG:102008</span></div>
          <div class="hscroll"><b class="al"></b><i class="thumb"></i><b class="ar"></b></div>
        </div>
        <div class="worldhead"><h3>Coordinate reference systems of the world</h3><label class="opt hide"><i class="check"></i>Hide deprecated CRSs</label></div>
        <div class="list all">
          <div class="lmain">
            <div class="rows">
              <div class="lhead"><span>Coordinate Reference System</span><span>Authority ID</span></div>
              <div class="lrow alt d2"><span>South_America_Albers_Equal_Area_...</span><span class="id">EPSG:102033</span></div>
              <div class="lrow d2"><span>USA_Contiguous_Albers_Equal_Are...</span><span class="id">EPSG:102003</span></div>
              <div class="lrow alt group"><svg class="chev" viewBox="0 0 10 6"><path d="M1 .8l4 4 4-4" fill="none" stroke="#444" stroke-width="1.500"/></svg><svg class="person"><use href="#person"/></svg><strong>User Defined Coordinate Systems</strong></div>
              <div class="lrow d1"><span>Albers Equal Area Conic (Hawaii)</span><span class="id">USER:100029</span></div>
            </div>
            <div class="vscroll"><b class="au"></b><i class="thumb"></i><b class="ad"></b></div>
          </div>
          <div class="hscroll"><b class="al"></b><i class="thumb"></i><b class="ar"></b></div>
        </div>
        <div class="selected"><h3>Selected CRS</h3><div class="field">Albers Equal Area Conic (Hawaii)</div></div>
        <div class="detail">
          <div class="proj">Extent: Extent not known<br>Proj4: +proj=aea +lat_1=9 +lat_2=36<br><span class="cont">+lat_0=13.5 +lon_0=-156 +x_0=0 +y_0=0</span><br><span class="cont">+datum=NAD83 +units=m +no_defs</span></div>
          <div class="preview">
            <svg viewBox="810 108 697 297" preserveAspectRatio="none">
              <g fill="#eceade" stroke="#7d7d6e" stroke-width="2.200" stroke-linejoin="round">
                <path d="M904 140L936 136 968 140 1000 138 1030 140 1040 136 1050 150 1036 158 1040 166 1052 152 1068 164 1074 172 1056 180 1048 190 1034 204 1030 212 1020 204 1006 210 1010 220 1022 220 1032 234 1044 240 1036 238 1016 230 996 222 984 210 972 192 964 176 954 164 938 152 920 154 904 158 890 166 902 152Z"/>
                <path d="M968 134L990 128 1010 130 1030 126 1044 134 1020 138 990 136ZM960 172H1030M980 202l16 2 10 8M938 138v14l16 12M1012 146l20 2-8 14-14-6z"/>
                <path d="M1042 122L1080 116 1130 120 1112 136 1096 152 1082 156 1072 146 1066 132 1040 126ZM990 124l40-8 50-2-30 10z"/>
                <path d="M1040 244L1050 238 1066 244 1084 256 1102 264 1094 286 1078 300 1066 316 1054 338 1044 340 1042 320 1046 290 1034 268 1036 256ZM1048 252l10 16 4 24-6 28M1060 246l12 14M1040 262l18 8M1050 284l16 8"/>
                <path d="M1150 168L1160 160 1158 148 1166 158 1180 150 1174 140 1196 134 1210 142 1240 140 1264 132 1300 138 1340 136 1380 140 1400 136 1442 138 1440 148 1420 152 1404 168 1400 154 1380 158 1374 176 1360 190 1348 210 1342 224 1330 222 1326 236 1310 222 1300 216 1284 244 1274 222 1256 216 1240 214 1252 220 1236 234 1220 228 1206 202 1190 196 1200 190 1176 188 1168 196 1148 192 1150 180 1162 178Z"/>
                <path d="M1134 214L1148 198 1180 194 1186 204 1208 206 1224 234 1244 232 1230 252 1222 268 1218 286 1202 306 1190 304 1180 280 1176 256 1162 244 1142 238 1132 226ZM1226 276l8-4-2 18-6 4z"/>
                <path fill="none" d="M1148 210l36 4 36-6M1154 198l-4 38M1168 206l4 40M1184 206l-2 30M1198 206l6 38M1132 226l44-2 46 4M1166 244l26-4 34 10M1180 262l20 4 24-4M1184 280l14-8 22 8M1196 244l-4 30 4 30M1208 250l-6 20 6 26M1166 168l20-6 30 8 30 10M1184 150l-6 14 6 30M1200 144l-4 24 8 26M1212 160l-4 40M1180 178l44 14M1250 176l40-10 60 4 20 8M1246 178l14 28 40 6M1274 190l30 10 40 2M1228 186l22 28M1290 202l16 20M1172 156l30 10"/>
                <path d="M1340 292L1362 274 1376 268 1380 278 1388 270 1400 300 1390 318 1372 316 1352 304 1342 306ZM1314 244l14 20 20 8M1334 244l14-8 2 20-14 4zM1370 254l16 4 12 6M1362 222l4 14 6 4"/>
                <path d="M876 396V388L912 384 916 376 960 376 1002 372 1040 378 1068 354 1050 376 1080 384 1120 370 1200 366 1270 362 1330 360 1400 366 1426 370 1414 378 1442 390V398Z"/>
                <path fill="none" d="M876 134l10 8 18 4M880 162l22-8M1180 122l20 4M1240 120l20 6M1290 122l30 2M1360 124l20 4M1400 176l10-8M1352 206l22-14 8-16M1408 268l12 10M1424 310l12 12-14 6M910 216l4 4M1022 218l30 10M1132 144l10 2M886 272l2 2M1268 330h4M880 322l3 1M1062 334l10 2M1240 290h6M1432 280l6 2"/>
              </g>
              <rect x="901" y="128" width="499" height="242" fill="#ce8ae4" fill-opacity=".33"/>
              <rect x="905" y="132" width="491" height="234" fill="none" stroke="#ce8ae4" stroke-opacity=".4" stroke-width="8"/>
              <path d="M1150 231v36M1132 249h36" stroke="#b44ccd" stroke-width="8"/>
            </svg>
          </div>
        </div>
      </fieldset>
      <fieldset class="datum">
        <legend>Datum Transformations</legend>
        <label class="opt ask"><i class="check"></i>Ask for datum transformation if several are available (defined in global setting)</label>
        <div class="minis">
          <button><svg viewBox="0 0 19 18"><path d="M7 2h5v5h5v5h-5v5H7v-5H2V7h5z" fill="#fff" stroke="#4f8a4f" stroke-width="1.200"/><path d="M9.500 4v11M4 9.500h11" stroke="#5a8c5a" stroke-width="2"/></svg></button>
          <button><svg viewBox="0 0 19 18"><rect x="2.500" y="6.500" width="14" height="6" fill="#fff" stroke="#e04848"/><path d="M4.500 9.500h10" stroke="#e85050" stroke-width="2.200"/></svg></button>
          <button><svg viewBox="1 0 24 24"><use href="#pencil" width="24" height="24"/></svg></button>
        </div>
        <div class="dtable"><span>Source CRS</span><span>Source datum transform</span><span>Destination CRS</span><span>Destination datum transform</span></div>
      </fieldset>
      <div class="buttons"><button class="ok">OK</button><button>Cancel</button><button>Apply</button><button>Help</button></div>
    </div>
  </div>
</div>
</body>
</html>
```
FILE: styles.css
```css
* { box-sizing: border-box; }
body { margin: 0; width: 1583px; height: 1040px; overflow: hidden; font: 12px/16px "Open Sans", "Noto Sans", sans-serif; letter-spacing: -.4px; color: #111; }
svg { display: block; flex: none; }
i, em { font-style: normal; display: block; flex: none; }
span { white-space: nowrap; }
.sprite { position: absolute; width: 0; height: 0; }

/* Main window */
.window { width: 1583px; height: 1040px; display: flex; flex-direction: column; background: #efefef; border: 1px solid #3a3a3a; border-bottom-width: 2px; }
.titlebar { height: 31px; background: #fff; display: flex; align-items: center; padding: 0 16px 2px 8px; flex: none; }
.logo { width: 16px; height: 16px; margin-right: 5px; }
.caption { flex: 1; color: #8f8f8f; letter-spacing: -.34px; }
.winbtns { width: 104px; height: 12px; }
.menubar { height: 20px; background: #fff; display: flex; gap: 16.050px; padding: 2px 0 0 8px; color: #999; flex: none; }
.menubar u { text-underline-offset: 2px; }

/* Toolbars */
.toolrow { height: 34px; display: flex; flex: none; border-top: 1px solid #fbfbfb; border-bottom: 1px solid #b4b4b4; }
.tools { display: flex; align-items: center; padding: 0 2px 1px 0; border-right: 1px solid #b4b4b4; }
.tools.last { border-right: 0; }
.tools:first-child .grip { margin-right: 3px; }
.grip { width: 2px; height: 27px; margin: 0 3px 0 4px; background: repeating-linear-gradient(#bcbcbc 0 2px, transparent 2px 4px); }
.tools > svg { width: 31px; height: 29px; padding: 2.500px 3.500px; }
.tools > svg.active { background: #c2dcf3; outline: 1px solid #90c8f6; outline-offset: -1px; }
.drop { width: 12.100px; height: 5px; background: linear-gradient(#333, #333) no-repeat; background-size: 8px 4px; background-position: 1px 0; clip-path: polygon(0 0, 9px 0, 5px 5px, 1px 0); }
.drop.dim { opacity: .65; }

/* Docks and canvas */
.work { flex: 1; display: flex; min-height: 0; }
.docks { width: 240px; margin-right: 4px; display: flex; flex-direction: column; }
.dock h2 { margin: 0; font-size: 12px; font-weight: 400; line-height: 19px; background: #d9d9d9; border: 1px solid #bbb; padding-left: 4px; height: 19px; flex: none; }
.dock { display: flex; flex-direction: column; }
.browser { height: 357px; padding-top: 1px; flex: none; }
.layers { flex: 1; padding-top: 5px; }
.docktools { height: 29px; flex: none; display: flex; align-items: center; padding: 3px 0 0 5px; gap: 5px; }
.layers .docktools { height: 28px; }
.docktools svg { width: 18px; height: 18px; }
.layers .docktools svg { width: 16px; height: 16px; }
.bluebit { width: 8px; height: 12px; background: #8fb5dc; }
.tree { flex: 1; background: #fff; border: 1px solid #828790; display: flex; flex-direction: column; justify-content: space-between; }
.layers .tree { justify-content: flex-start; }
.twisty { width: 10px; height: 30px; margin: 5px 0 0 25px; }
.layerrow { margin: 1px 0 0 20px; height: 20px; background: #d9d9d9; padding: 3px 3px; }
.canvas { flex: 1; background: #fff; border: 1px solid #828790; border-right: 0; }
.canvas svg { width: 1336px; height: 856px; }

/* Shared controls */
.check { width: 13px; height: 13px; border: 1px solid #333; background: #fff; }
.check.on { display: flex; justify-content: center; }
.check.on::before { content: ""; width: 4px; height: 8px; border: solid #222; border-width: 0 1.300px 1.300px 0; transform: rotate(40deg); }
.field { background: #fff; border: 1px solid #7a7a7a; height: 20px; display: flex; align-items: center; }
.g12 { width: 13px; height: 13px; }
.hscroll { height: 16px; background: #f0f0f0; display: flex; align-items: center; flex: none; padding-bottom: 1px; }
.hscroll b, .vscroll b, .f-scale b { width: 6px; height: 6px; border: solid #505050; border-width: 2px 0 0 2px; flex: none; }
.hscroll .al { transform: rotate(-45deg); margin: 0 4px 0 7px; }
.hscroll .ar { transform: rotate(135deg); margin-left: 7px; }
.thumb { background: #cdcdcd; height: 15px; }
.browser .thumb { flex: 1; }

/* Status bar */
.status { height: 26px; flex: none; display: flex; align-items: center; padding: 2px 2px 0 4px; font-stretch: 75%; font-size: 10px; letter-spacing: 0; }
.status > span { flex: none; }
.status .field { height: 20px; flex: none; padding-left: 5px; }
.status .locate { width: 200px; font-size: 12px; font-stretch: 100%; letter-spacing: -.4px; color: #777; padding-left: 8px; gap: 6px; }
.ready { width: 668px; padding-left: 8px; }
.s-coord { width: 40px; }
.f-coord { width: 74px; }
.mouse { width: 16px; height: 18px; margin: 0 13px 0 3px; }
.s-scale { width: 21px; }
.f-scale { width: 78px; }
.status .f-scale b { width: 6px; height: 6px; margin: -4px 5px 0 auto; transform: rotate(-135deg); border-width: 1px 0 0 1px; }
.lock { width: 12px; height: 16px; margin: 0 9px 0 11px; }
.s-mag { width: 35px; }
.f-mag { width: 82px; }
.s-rot { padding-left: 9px; width: 47px; }
.f-rot { width: 80px; margin-right: 6px; }
.f-coord, .f-mag, .f-rot { letter-spacing: -.1px; }
.spin { margin: 0 1px 0 auto; display: flex; flex-direction: column; width: 15px; height: 17px; }
.spin b { flex: 1; border: 1px solid #aaa; background: #e8e8e8; display: flex; justify-content: center; align-items: center; }
.spin b::before { content: ""; border: 3px solid transparent; border-top: 0; border-bottom: 4px solid #111; }
.spin b + b::before { border: 3px solid transparent; border-bottom: 0; border-top: 4px solid #111; }
.s-render { padding-left: 5px; width: 46px; }
.world { width: 16px; height: 16px; margin-right: 3px; }
.s-user { width: 62px; letter-spacing: .1px; }
.bubble { width: 16px; height: 16px; }
.sizegrip { width: 9px; height: 9px; margin: 12px 0 0 auto; }

/* Dialog window */
.dialog { position: absolute; left: 31px; top: 151px; width: 702px; height: 816px; background: #efefef; border: 1px solid #1883d7; box-shadow: 0 5px 15px rgba(0, 0, 0, .38); display: flex; flex-direction: column; }
.dtitle { height: 30px; background: #fff; display: flex; align-items: center; padding: 0 18px 0 8px; flex: none; }
.dtitle span { flex: 1; letter-spacing: -.5px; color: #000; }
.dtitle .dbtns { width: 56px; height: 12px; order: 2; margin: -2px 0 0 -9px; }
.q { font-size: 14px; font-weight: 600; }
.dbody { flex: 1; display: flex; min-height: 0; }
.side { width: 151px; background: #5d5d5d; color: #fff; letter-spacing: -.42px; }
.sfind { height: 20px; background: #fff; border: 1px solid #7a7a7a; padding: 2px 0 0 8px; }
.side ul { list-style: none; margin: 6px 0 0; padding: 0; }
.side li { height: 38px; display: flex; align-items: center; gap: 7px; padding: 1px 0 0 4px; }
.side li svg { width: 26px; height: 26px; margin-top: -3px; }
.side li.sel { background: #efefef; color: #000; padding-left: 5px; }
.side li.sel svg { width: 28px; }
.page { flex: 1; padding: 0 12px 0 14px; font: 11px/13px "DejaVu Sans Condensed", "DejaVu Sans", sans-serif; letter-spacing: -.12px; color: #000; }
fieldset { margin: 0; border: 1px solid #dcdcdc; padding: 0 9px; min-width: 0; }
legend { font-weight: 700; color: #3c3c3c; padding: 0 2px; margin-left: -3px; letter-spacing: .1px; }
h3 { margin: 0; font-size: 11px; font-weight: 700; line-height: 13px; letter-spacing: .03px; }
.crs { margin-top: 13px; height: 550px; }
.opt { display: flex; align-items: center; gap: 4px; }
.noproj { margin-top: 11px; }
.filter { display: flex; align-items: center; margin-top: 8px; }
.filter span { width: 30px; letter-spacing: -.3px; padding-top: 1px; }
.filter .field { flex: 1; padding: 0 8px; }
.filter em { flex: 1; margin-left: 6px; letter-spacing: 0; padding-top: 1px; }
.clear { width: 13px; height: 10px; }
.h-recent { margin-top: 7px; letter-spacing: .1px; }
.list { background: #fff; border: 1px solid #828790; font: 12px/20px "Open Sans", sans-serif; letter-spacing: -.4px; display: flex; flex-direction: column; }
.recent { height: 149px; margin-top: 5px; }
.lhead { height: 23px; display: flex; line-height: 23px; flex: none; }
.lhead span:first-child { width: 264px; padding-left: 4px; border-right: 1px solid #e2e2e2; margin-right: 4px; letter-spacing: -.4px; }
.lhead span + span { letter-spacing: -.33px; }
.lrow { height: 20px; display: flex; line-height: 20px; }
.recent .lrow { line-height: 18px; }
.recent .lrow span:first-child { width: 267px; padding-left: 3px; letter-spacing: -.32px; }
.lrow .id { letter-spacing: -.68px; }
.recent .hscroll { margin-top: auto; }
.recent .thumb { width: 466px; }
.worldhead { display: flex; justify-content: space-between; align-items: center; margin-top: 9px; height: 13px; }
.worldhead h3 { padding-top: 1px; }
.hide { font: 12px/13px "Open Sans", sans-serif; letter-spacing: -.1px; margin-right: 4px; gap: 5px; }
.all { height: 138px; margin-top: 9px; }
.lmain { flex: 1; display: flex; }
.rows { width: 486px; }
.alt { background: #f5f5f5; }
.d2 span:first-child { padding-left: 63px; width: 267px; letter-spacing: -.33px; }
.d1 { margin-left: 40px; background: #cce8ff; }
.d1 span:first-child { padding-left: 3px; width: 227px; letter-spacing: -.23px; }
.group { align-items: center; }
.chev { width: 10px; height: 6px; margin: 0 10px 0 4px; }
.person { width: 14px; height: 14px; margin-right: 7px; }
.group strong { font-style: italic; letter-spacing: -.1px; }
.vscroll { width: 16px; background: #f0f0f0; display: flex; flex-direction: column; align-items: center; }
.vscroll .au { transform: rotate(45deg); margin-top: 7px; }
.vscroll .ad { transform: rotate(-135deg); margin-top: 4px; }
.vscroll .thumb { width: 15px; height: 18px; margin-top: 71px; }
.all .thumb { flex: none; }
.all .hscroll .thumb { width: 433px; }
.all .hscroll .ar { margin-left: 23px; }
.selected { display: flex; align-items: center; margin-top: 6px; }
.selected h3 { width: 80px; padding-top: 1px; }
.selected .field { flex: 1; padding: 1px 0 0 2px; letter-spacing: -.21px; }
.detail { display: flex; gap: 6px; margin-top: 6px; height: 101px; }
.proj { width: 256px; background: #fff; border: 1px solid #7a7a7a; padding: 5px 3px; letter-spacing: -.1px; }
.cont { padding-left: 2px; }
.preview { flex: 1; background: #fff; border: 1px solid #828790; }
.preview svg { width: 100%; height: 100%; }
.datum { margin-top: 8px; height: 171px; }
.ask { margin-top: 11px; color: #838383; letter-spacing: -.2px; gap: 5px; white-space: nowrap; }
.ask .check { border-color: #ccc; }
.minis { display: flex; gap: 8px; margin: 18px 0 0 10px; }
button { background: #e1e1e1; border: 1px solid #adadad; padding: 0; font: inherit; color: #000; border-radius: 0; letter-spacing: -.36px; }
.minis button { width: 21px; height: 20px; }
.minis svg { width: 19px; height: 18px; }
.dtable { display: flex; height: 71px; width: 486px; margin: 7px 0 0 9px; background: #fff; border: 1px solid #828790; font: 12px/23px "Open Sans", sans-serif; letter-spacing: -.4px; }
.dtable span { height: 23px; border-right: 1px solid #e2e2e2; padding-left: 8px; }
.dtable span:nth-child(1) { width: 72px; padding-left: 6px; }
.dtable span:nth-child(2) { width: 145px; }
.dtable span:nth-child(3) { width: 97px; padding-left: 6px; }
.dtable span:nth-child(4) { width: 169px; }
.buttons { display: flex; gap: 8px; justify-content: flex-end; margin: 17px -8px 0 0; }
.buttons button { width: 73px; height: 21px; }
.buttons .ok { border: 2px solid #0078d7; }
```
